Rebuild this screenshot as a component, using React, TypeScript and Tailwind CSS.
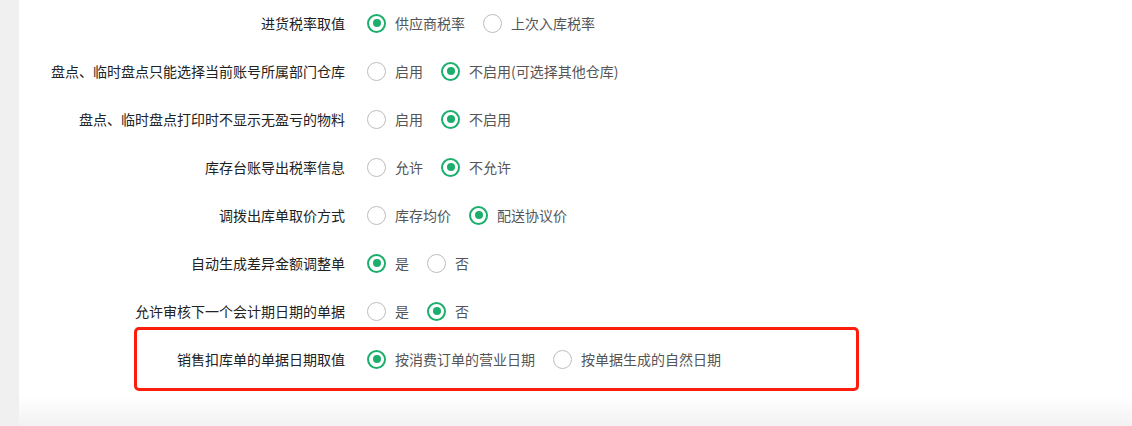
const ROWS = [
  { label: "进货税率取值", options: ["供应商税率", "上次入库税率"], value: 0 },
  { label: "盘点、临时盘点只能选择当前账号所属部门仓库", options: ["启用", "不启用(可选择其他仓库)"], value: 1 },
  { label: "盘点、临时盘点打印时不显示无盈亏的物料", options: ["启用", "不启用"], value: 1 },
  { label: "库存台账导出税率信息", options: ["允许", "不允许"], value: 1 },
  { label: "调拨出库单取价方式", options: ["库存均价", "配送协议价"], value: 1 },
  { label: "自动生成差异金额调整单", options: ["是", "否"], value: 0 },
  { label: "允许审核下一个会计期日期的单据", options: ["是", "否"], value: 1 },
];

const LAST = { label: "销售扣库单的单据日期取值", options: ["按消费订单的营业日期", "按单据生成的自然日期"], value: 0 };

function Radio({ checked }: { checked: boolean }) {
  return checked ? (
    <span className="flex h-[19px] w-[19px] shrink-0 items-center justify-center rounded-full border-2 border-[#1cae6c] bg-white">
      <span className="h-[8px] w-[8px] rounded-full bg-[#1cae6c]" />
    </span>
  ) : (
    <span className="h-[19px] w-[19px] shrink-0 rounded-full border-[1.5px] border-[#bdbdbd] bg-white" />
  );
}

function Options({ options, value }: { options: string[]; value: number }) {
  return (
    <div className="flex items-center gap-[18px]">
      {options.map((opt, i) => (
        <label key={opt} className="flex items-center gap-[9px] text-[14px] text-[#555]">
          <Radio checked={i === value} />
          <span>{opt}</span>
        </label>
      ))}
    </div>
  );
}

export default function App() {
  return (
    <div
      className="flex h-[426px] w-[1132px] overflow-hidden bg-[#f0f0f0]"
      style={{ fontFamily: '"Noto Sans CJK SC", "Noto Sans", sans-serif' }}
    >
      <div className="ml-[19px] flex flex-1 flex-col bg-white">
        <div className="mt-[-1px] flex flex-col">
          {ROWS.map((row) => (
            <div key={row.label} className="flex h-[48px] items-center gap-[22px]">
              <div className="w-[326px] text-right text-[14px] text-[#222]">{row.label}</div>
              <Options options={row.options} value={row.value} />
            </div>
          ))}
        </div>
        <div className="-mt-2 ml-[115px] flex h-[64px] w-[725px] items-center gap-[22px] rounded-[5px] border-[3px] border-[#fb1e0c]">
          <div className="w-[208px] text-right text-[14px] text-[#222]">{LAST.label}</div>
          <Options options={LAST.options} value={LAST.value} />
        </div>
        <div className="mt-auto h-[30px] bg-gradient-to-b from-white to-[#f2f2f2]" />
      </div>
    </div>
  );
}
